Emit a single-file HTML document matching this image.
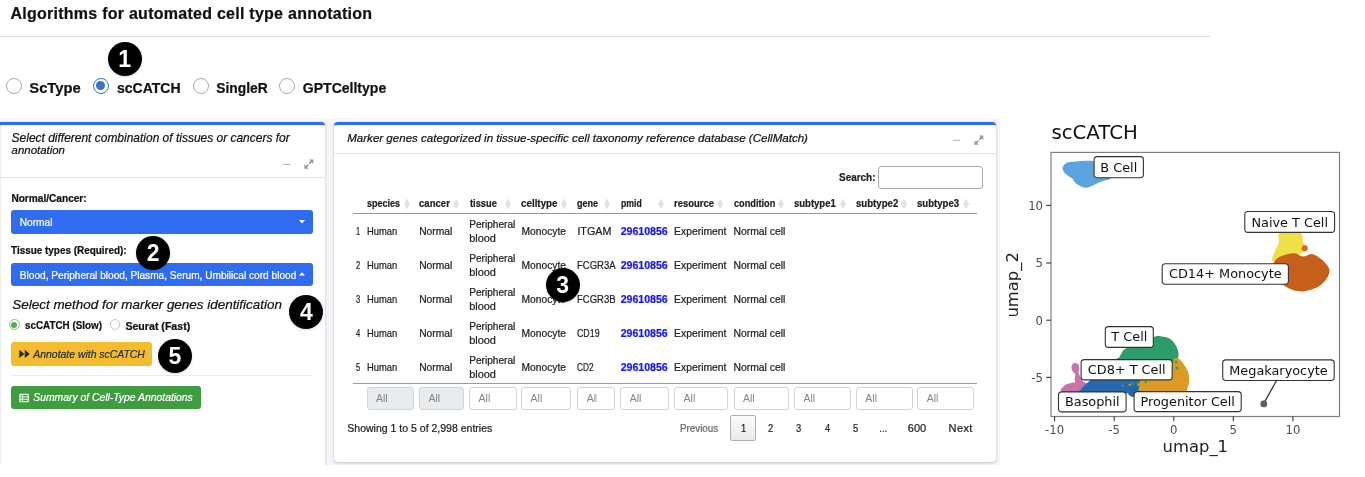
<!DOCTYPE html>
<html lang="en">
<head>
<meta charset="utf-8">
<title>Algorithms for automated cell type annotation</title>
<style>
html,body{margin:0;padding:0;background:#fff;}
body{width:1365px;height:477px;overflow:hidden;position:relative;font-family:"Liberation Sans",sans-serif;}
.a{position:absolute;box-sizing:border-box;}
.t{position:absolute;white-space:pre;line-height:1;-webkit-text-stroke:0.22px currentColor;transform-origin:0 50%;font-family:"Liberation Sans",sans-serif;}
.card{position:absolute;box-sizing:border-box;background:#fff;border-top:3px solid #2f6cf0;border-radius:4px;box-shadow:0 0 1px rgba(0,0,0,.13),0 1px 3px rgba(0,0,0,.2);}
.hl{position:absolute;height:1px;background:rgba(0,0,0,.11);}
.sel{position:absolute;box-sizing:border-box;background:#2f6cf0;border-radius:3px;}
.num{position:absolute;width:34px;height:34px;border-radius:50%;background:#000;color:#fff;font:700 23px/34px "Liberation Sans",sans-serif;text-align:center;box-shadow:0 1px 3px rgba(0,0,0,.15);}
.radio{position:absolute;box-sizing:border-box;border-radius:50%;background:#fff;border:1px solid #a9a9a9;}
.fi{position:absolute;box-sizing:border-box;top:386.6px;height:23.2px;border:1px solid #ced4da;border-radius:3px;background:#fff;overflow:hidden;color:#7d858d;font:400 10.5px/21.4px "Liberation Sans",sans-serif;padding-left:8.3px;white-space:pre;}
.fi.d{background:#e9ecef;}
.srt{position:absolute;top:198px;width:6px;height:12px;}
</style>
</head>
<body>
<div id="app" style="position:absolute;left:0;top:0;width:1365px;height:477px;will-change:transform">
<!-- page header -->
<div class="hl" style="left:0;top:36px;width:1210px;background:#d9d9d9"></div>

<!-- algorithm radio buttons -->
<div class="radio" style="left:5.8px;top:78px;width:16px;height:16px"></div>
<div class="radio" style="left:92.8px;top:78px;width:16px;height:16px;border:1.5px solid #2f6fd6"><div class="a" style="left:2px;top:2px;width:9px;height:9px;border-radius:50%;background:#3b71c8"></div></div>
<div class="radio" style="left:193.1px;top:78px;width:16px;height:16px"></div>
<div class="radio" style="left:279.2px;top:78px;width:16px;height:16px"></div>

<!-- content wrapper -->
<div class="a" style="left:0;top:118px;width:1000px;height:346.6px;background:#f4f6f9"></div>

<!-- left card -->
<div class="card" style="left:-4px;top:121.8px;width:329.3px;height:360px"></div>
<div class="a" style="left:0;top:124px;width:1px;height:341px;background:rgba(0,0,0,.07)"></div>
<div class="hl" style="left:0;top:177px;width:325px"></div>
<svg class="a" style="left:280px;top:157px" width="36" height="14" viewBox="0 0 36 14"><rect x="3" y="6.8" width="7.2" height="1.1" fill="#adb5bd"/><g fill="#949ca5"><path d="M29 2.6h4.3v4.3l-1.5-1.5-1.9 1.9-1.3-1.3 1.9-1.9z"/><path d="M28.6 11.8h-4.3v-4.3l1.5 1.5 1.9-1.9 1.3 1.3-1.9 1.9z"/></g></svg>
<div class="sel" style="left:11.3px;top:210px;width:301.4px;height:23.5px"></div>
<svg class="a" style="left:299px;top:219.5px" width="6" height="4" viewBox="0 0 6 4"><path d="M0 0h6L3 3.4z" fill="#fff"/></svg>
<div class="sel" style="left:11.3px;top:262.7px;width:301.4px;height:23.4px"></div>
<svg class="a" style="left:299px;top:272.3px" width="6" height="4" viewBox="0 0 6 4"><path d="M0 3.6h6L3 .2z" fill="#fff"/></svg>
<!-- method radios -->
<div class="radio" style="left:8.6px;top:319px;width:11.4px;height:11.4px;border:1.1px solid #79c47b"><div class="a" style="left:1.5px;top:1.5px;width:6.2px;height:6.2px;border-radius:50%;background:#4fad52"></div></div>
<div class="radio" style="left:109.7px;top:319.3px;width:10.7px;height:10.7px;border-color:#c6c6c6"></div>
<!-- buttons -->
<div class="a" style="left:11.4px;top:342.2px;width:140.7px;height:23.6px;background:#f5bc30;border-radius:3px"></div>
<svg class="a" style="left:19.2px;top:349.3px" width="11.9" height="9.8" viewBox="0 0 11 9"><path d="M.3 .6L5 4.5.3 8.4zM5.3 .6L10 4.5 5.3 8.4z" fill="#1f2d3d"/></svg>
<div class="hl" style="left:11.4px;top:375.3px;width:301.3px;background:rgba(0,0,0,.075)"></div>
<div class="a" style="left:11.4px;top:386.2px;width:189.5px;height:23.2px;background:#3f9c41;border-radius:3px"></div>
<svg class="a" style="left:19.3px;top:392.9px" width="10.2" height="10.2" viewBox="0 0 9 9"><rect x=".3" y=".6" width="8.4" height="7.6" rx=".9" fill="#fff"/><g fill="#3f9c41"><rect x="1.3" y="1.7" width="1.5" height="1.3"/><rect x="3.6" y="1.7" width="4.1" height="1.3"/><rect x="1.3" y="3.8" width="1.5" height="1.3"/><rect x="3.6" y="3.8" width="4.1" height="1.3"/><rect x="1.3" y="5.9" width="1.5" height="1.3"/><rect x="3.6" y="5.9" width="4.1" height="1.3"/></g></svg>

<!-- table card -->
<div class="card" style="left:334.4px;top:121.8px;width:661.3px;height:340.2px"></div>
<div class="hl" style="left:334.4px;top:153px;width:661.3px"></div>
<svg class="a" style="left:950px;top:132.5px" width="36" height="14" viewBox="0 0 36 14"><rect x="3" y="6.8" width="7.2" height="1.1" fill="#adb5bd"/><g fill="#949ca5"><path d="M29 2.6h4.3v4.3l-1.5-1.5-1.9 1.9-1.3-1.3 1.9-1.9z"/><path d="M28.6 11.8h-4.3v-4.3l1.5 1.5 1.9-1.9 1.3 1.3-1.9 1.9z"/></g></svg>
<div class="a" style="left:878px;top:166px;width:105px;height:22.6px;border:1px solid #aaa;border-radius:3px;background:#fff"></div>
<div class="hl" style="left:353px;top:212.8px;width:624px;background:#9a9a9a"></div>
<div class="hl" style="left:353px;top:383px;width:624px;background:#9a9a9a"></div>
<svg class="srt" style="left:403.5px" viewBox="0 0 6 12"><path d="M3 .5L5.95 6 3 11.5 .05 6z" fill="#e3e3e3"/></svg>
<svg class="srt" style="left:452.9px" viewBox="0 0 6 12"><path d="M3 .5L5.95 6 3 11.5 .05 6z" fill="#e3e3e3"/></svg>
<svg class="srt" style="left:505.1px" viewBox="0 0 6 12"><path d="M3 .5L5.95 6 3 11.5 .05 6z" fill="#e3e3e3"/></svg>
<svg class="srt" style="left:561.1px" viewBox="0 0 6 12"><path d="M3 .5L5.95 6 3 11.5 .05 6z" fill="#e3e3e3"/></svg>
<svg class="srt" style="left:604.2px" viewBox="0 0 6 12"><path d="M3 .5L5.95 6 3 11.5 .05 6z" fill="#e3e3e3"/></svg>
<svg class="srt" style="left:657.9px" viewBox="0 0 6 12"><path d="M3 .5L5.95 6 3 11.5 .05 6z" fill="#e3e3e3"/></svg>
<svg class="srt" style="left:717.4px" viewBox="0 0 6 12"><path d="M3 .5L5.95 6 3 11.5 .05 6z" fill="#e3e3e3"/></svg>
<svg class="srt" style="left:777.5px" viewBox="0 0 6 12"><path d="M3 .5L5.95 6 3 11.5 .05 6z" fill="#e3e3e3"/></svg>
<svg class="srt" style="left:839.6px" viewBox="0 0 6 12"><path d="M3 .5L5.95 6 3 11.5 .05 6z" fill="#e3e3e3"/></svg>
<svg class="srt" style="left:901.3px" viewBox="0 0 6 12"><path d="M3 .5L5.95 6 3 11.5 .05 6z" fill="#e3e3e3"/></svg>
<svg class="srt" style="left:962.7px" viewBox="0 0 6 12"><path d="M3 .5L5.95 6 3 11.5 .05 6z" fill="#e3e3e3"/></svg>

<div class="fi d" style="left:366.6px;width:47.2px">All</div>
<div class="fi d" style="left:419.2px;width:44.5px">All</div>
<div class="fi" style="left:469.3px;width:47.4px">All</div>
<div class="fi" style="left:521.3px;width:50.2px">All</div>
<div class="fi" style="left:577.4px;width:37.7px"><span style="display:inline-block;width:10.4px;overflow:hidden;vertical-align:top">All</span></div>
<div class="fi" style="left:620.4px;width:48.6px">All</div>
<div class="fi" style="left:674.3px;width:54.0px">All</div>
<div class="fi" style="left:733.6px;width:55.1px">All</div>
<div class="fi" style="left:794.1px;width:56.6px">All</div>
<div class="fi" style="left:856px;width:57.0px">All</div>
<div class="fi" style="left:917.4px;width:56.4px">All</div>

<div class="a" style="left:730.2px;top:415px;width:25.8px;height:25.6px;border:1px solid #b0b0b0;border-radius:2px;background:linear-gradient(#fcfcfc,#e9e9e9)"></div>

<div class="a" style="left:0;top:464.7px;width:1000px;height:13px;background:#fff"></div>
<span class="t" style="left:10.4px;top:6.1px;font-size:16.00px;font-weight:700;color:#111;letter-spacing:0.26px;">Algorithms for automated cell type annotation</span>
<span class="t" style="left:29.3px;top:80.8px;font-size:14.76px;font-weight:700;color:#111;">ScType</span>
<span class="t" style="left:117.0px;top:81.4px;font-size:14.01px;font-weight:700;color:#111;">scCATCH</span>
<span class="t" style="left:216.3px;top:81.6px;font-size:13.80px;font-weight:700;color:#111;">SingleR</span>
<span class="t" style="left:302.8px;top:81.4px;font-size:14.04px;font-weight:700;color:#111;">GPTCelltype</span>
<span class="t" style="left:11.6px;top:132.4px;font-size:11.98px;font-style:italic;color:#111;">Select different combination of tissues or cancers for</span>
<span class="t" style="left:11.6px;top:144.6px;font-size:11.43px;font-style:italic;color:#111;">annotation</span>
<span class="t" style="left:11.4px;top:193.7px;font-size:10.12px;font-weight:700;color:#111;">Normal/Cancer:</span>
<span class="t" style="left:19.8px;top:218.2px;font-size:10.12px;color:#fff;">Normal</span>
<span class="t" style="left:11.4px;top:246.3px;font-size:10.12px;font-weight:700;color:#111;transform:scaleX(0.982);">Tissue types (Required):</span>
<span class="t" style="left:19.8px;top:270.7px;font-size:10.12px;color:#fff;">Blood, Peripheral blood, Plasma, Serum, Umbilical cord blood</span>
<span class="t" style="left:12.3px;top:297.9px;font-size:13.44px;font-style:italic;color:#111;">Select method for marker genes identification</span>
<span class="t" style="left:25.1px;top:321.1px;font-size:10.12px;font-weight:700;color:#111;transform:scaleX(0.975);">scCATCH (Slow)</span>
<span class="t" style="left:125.4px;top:320.7px;font-size:10.62px;font-weight:700;color:#111;">Seurat (Fast)</span>
<span class="t" style="left:33.3px;top:349.8px;font-size:10.43px;font-style:italic;color:#1f2d3d;">Annotate with scCATCH</span>
<span class="t" style="left:33.3px;top:393.4px;font-size:10.37px;font-style:italic;color:#fff;">Summary of Cell-Type Annotations</span>
<span class="t" style="left:347.2px;top:132.8px;font-size:11.57px;font-style:italic;color:#111;">Marker genes categorized in tissue-specific cell taxonomy reference database (CellMatch)</span>
<span class="t" style="left:839.1px;top:173.3px;font-size:10.12px;font-weight:700;color:#222;transform:scaleX(0.983);">Search:</span>
<span class="t" style="left:366.7px;top:199.3px;font-size:10.12px;font-weight:700;color:#222;transform:scaleX(0.891);">species</span>
<span class="t" style="left:419.1px;top:199.3px;font-size:10.12px;font-weight:700;color:#222;transform:scaleX(0.947);">cancer</span>
<span class="t" style="left:469.8px;top:199.3px;font-size:10.12px;font-weight:700;color:#222;transform:scaleX(0.920);">tissue</span>
<span class="t" style="left:521.4px;top:199.3px;font-size:10.12px;font-weight:700;color:#222;transform:scaleX(0.971);">celltype</span>
<span class="t" style="left:576.8px;top:199.3px;font-size:10.12px;font-weight:700;color:#222;transform:scaleX(0.893);">gene</span>
<span class="t" style="left:620.7px;top:199.3px;font-size:10.12px;font-weight:700;color:#222;transform:scaleX(0.856);">pmid</span>
<span class="t" style="left:674.1px;top:199.3px;font-size:10.12px;font-weight:700;color:#222;transform:scaleX(0.938);">resource</span>
<span class="t" style="left:733.5px;top:199.3px;font-size:10.12px;font-weight:700;color:#222;transform:scaleX(0.907);">condition</span>
<span class="t" style="left:793.9px;top:199.3px;font-size:10.12px;font-weight:700;color:#222;transform:scaleX(0.941);">subtype1</span>
<span class="t" style="left:855.6px;top:199.3px;font-size:10.12px;font-weight:700;color:#222;transform:scaleX(0.952);">subtype2</span>
<span class="t" style="left:917.4px;top:199.3px;font-size:10.12px;font-weight:700;color:#222;transform:scaleX(0.950);">subtype3</span>
<span class="t" style="left:355.8px;top:226.8px;font-size:10.12px;color:#222;transform:scaleX(0.745);">1</span>
<span class="t" style="left:366.9px;top:226.8px;font-size:10.12px;color:#222;transform:scaleX(0.929);">Human</span>
<span class="t" style="left:419.2px;top:226.7px;font-size:10.27px;color:#222;">Normal</span>
<span class="t" style="left:469.2px;top:219.8px;font-size:10.14px;color:#222;">Peripheral</span>
<span class="t" style="left:469.2px;top:233.4px;font-size:10.95px;color:#222;">blood</span>
<span class="t" style="left:521.6px;top:226.7px;font-size:10.24px;color:#222;">Monocyte</span>
<span class="t" style="left:577.4px;top:226.3px;font-size:10.73px;color:#222;">ITGAM</span>
<span class="t" style="left:620.7px;top:226.4px;font-size:10.58px;font-weight:700;color:#1414ff;">29610856</span>
<span class="t" style="left:674.1px;top:226.6px;font-size:10.36px;color:#222;">Experiment</span>
<span class="t" style="left:733.5px;top:226.6px;font-size:10.36px;color:#222;">Normal cell</span>
<span class="t" style="left:355.8px;top:260.8px;font-size:10.12px;color:#222;transform:scaleX(0.745);">2</span>
<span class="t" style="left:366.9px;top:260.8px;font-size:10.12px;color:#222;transform:scaleX(0.929);">Human</span>
<span class="t" style="left:419.2px;top:260.7px;font-size:10.27px;color:#222;">Normal</span>
<span class="t" style="left:469.2px;top:253.8px;font-size:10.14px;color:#222;">Peripheral</span>
<span class="t" style="left:469.2px;top:267.4px;font-size:10.95px;color:#222;">blood</span>
<span class="t" style="left:521.6px;top:260.7px;font-size:10.24px;color:#222;">Monocyte</span>
<span class="t" style="left:577.4px;top:260.8px;font-size:10.12px;color:#222;transform:scaleX(0.940);">FCGR3A</span>
<span class="t" style="left:620.7px;top:260.4px;font-size:10.58px;font-weight:700;color:#1414ff;">29610856</span>
<span class="t" style="left:674.1px;top:260.6px;font-size:10.36px;color:#222;">Experiment</span>
<span class="t" style="left:733.5px;top:260.6px;font-size:10.36px;color:#222;">Normal cell</span>
<span class="t" style="left:355.8px;top:294.8px;font-size:10.12px;color:#222;transform:scaleX(0.745);">3</span>
<span class="t" style="left:366.9px;top:294.8px;font-size:10.12px;color:#222;transform:scaleX(0.929);">Human</span>
<span class="t" style="left:419.2px;top:294.7px;font-size:10.27px;color:#222;">Normal</span>
<span class="t" style="left:469.2px;top:287.8px;font-size:10.14px;color:#222;">Peripheral</span>
<span class="t" style="left:469.2px;top:301.4px;font-size:10.95px;color:#222;">blood</span>
<span class="t" style="left:521.6px;top:294.7px;font-size:10.24px;color:#222;">Monocyte</span>
<span class="t" style="left:577.4px;top:294.8px;font-size:10.12px;color:#222;transform:scaleX(0.940);">FCGR3B</span>
<span class="t" style="left:620.7px;top:294.4px;font-size:10.58px;font-weight:700;color:#1414ff;">29610856</span>
<span class="t" style="left:674.1px;top:294.6px;font-size:10.36px;color:#222;">Experiment</span>
<span class="t" style="left:733.5px;top:294.6px;font-size:10.36px;color:#222;">Normal cell</span>
<span class="t" style="left:355.8px;top:328.8px;font-size:10.12px;color:#222;transform:scaleX(0.745);">4</span>
<span class="t" style="left:366.9px;top:328.8px;font-size:10.12px;color:#222;transform:scaleX(0.929);">Human</span>
<span class="t" style="left:419.2px;top:328.7px;font-size:10.27px;color:#222;">Normal</span>
<span class="t" style="left:469.2px;top:321.8px;font-size:10.14px;color:#222;">Peripheral</span>
<span class="t" style="left:469.2px;top:335.4px;font-size:10.95px;color:#222;">blood</span>
<span class="t" style="left:521.6px;top:328.7px;font-size:10.24px;color:#222;">Monocyte</span>
<span class="t" style="left:577.4px;top:328.8px;font-size:10.12px;color:#222;transform:scaleX(0.873);">CD19</span>
<span class="t" style="left:620.7px;top:328.4px;font-size:10.58px;font-weight:700;color:#1414ff;">29610856</span>
<span class="t" style="left:674.1px;top:328.6px;font-size:10.36px;color:#222;">Experiment</span>
<span class="t" style="left:733.5px;top:328.6px;font-size:10.36px;color:#222;">Normal cell</span>
<span class="t" style="left:355.8px;top:362.8px;font-size:10.12px;color:#222;transform:scaleX(0.745);">5</span>
<span class="t" style="left:366.9px;top:362.8px;font-size:10.12px;color:#222;transform:scaleX(0.929);">Human</span>
<span class="t" style="left:419.2px;top:362.7px;font-size:10.27px;color:#222;">Normal</span>
<span class="t" style="left:469.2px;top:355.8px;font-size:10.14px;color:#222;">Peripheral</span>
<span class="t" style="left:469.2px;top:369.4px;font-size:10.95px;color:#222;">blood</span>
<span class="t" style="left:521.6px;top:362.7px;font-size:10.24px;color:#222;">Monocyte</span>
<span class="t" style="left:577.4px;top:362.8px;font-size:10.12px;color:#222;transform:scaleX(0.820);">CD2</span>
<span class="t" style="left:620.7px;top:362.4px;font-size:10.58px;font-weight:700;color:#1414ff;">29610856</span>
<span class="t" style="left:674.1px;top:362.6px;font-size:10.36px;color:#222;">Experiment</span>
<span class="t" style="left:733.5px;top:362.6px;font-size:10.36px;color:#222;">Normal cell</span>
<span class="t" style="left:347.3px;top:423.0px;font-size:10.52px;color:#222;">Showing 1 to 5 of 2,998 entries</span>
<span class="t" style="left:679.5px;top:423.8px;font-size:10.12px;color:#666;transform:scaleX(0.970);">Previous</span>
<span class="t" style="left:740.5px;top:423.8px;font-size:10.12px;color:#222;transform:scaleX(0.923);">1</span>
<span class="t" style="left:767.7px;top:423.8px;font-size:10.12px;color:#222;transform:scaleX(0.923);">2</span>
<span class="t" style="left:796.1px;top:423.8px;font-size:10.12px;color:#222;transform:scaleX(0.923);">3</span>
<span class="t" style="left:824.6px;top:423.8px;font-size:10.12px;color:#222;transform:scaleX(0.923);">4</span>
<span class="t" style="left:852.9px;top:423.8px;font-size:10.12px;color:#222;transform:scaleX(0.923);">5</span>
<span class="t" style="left:878.5px;top:423.8px;font-size:10.12px;color:#222;transform:scaleX(0.840);">…</span>
<span class="t" style="left:907.7px;top:423.1px;font-size:11.00px;color:#222;letter-spacing:0.07px;">600</span>
<span class="t" style="left:948.6px;top:423.1px;font-size:11.00px;color:#222;letter-spacing:0.36px;">Next</span>

<!-- step markers -->
<div class="num" style="left:107.6px;top:41.8px">1</div>
<div class="num" style="left:136.1px;top:236.4px">2</div>
<div class="num" style="left:545.7px;top:267.8px">3</div>
<div class="num" style="left:289.3px;top:294.5px">4</div>
<div class="num" style="left:157.8px;top:339px">5</div>

<!-- UMAP plot -->
<svg class="a" style="left:1000px;top:100px" width="365" height="377" viewBox="1000 100 365 377" font-family="DejaVu Sans, Liberation Sans, sans-serif">
<rect x="1000" y="100" width="365" height="377" fill="#fff"/>
<path d="M1062.6 167.6C1062.8 166.2 1063.8 164.8 1065.1 163.9C1066.4 163.0 1066.6 162.5 1070.2 162.0C1073.8 161.5 1082.3 160.7 1086.5 160.7C1090.7 160.7 1092.4 160.4 1095.3 162.0C1098.2 163.6 1101.4 167.3 1104.0 170.0C1106.6 172.7 1111.4 176.1 1111.0 178.0C1110.6 179.9 1104.6 180.2 1101.6 181.5C1098.6 182.8 1095.3 184.4 1092.8 185.5C1090.3 186.6 1088.6 187.7 1086.5 187.8C1084.4 187.9 1082.1 186.8 1080.2 185.9C1078.3 185.1 1076.6 184.0 1075.2 182.7C1073.8 181.4 1073.3 179.5 1072.0 178.3C1070.7 177.1 1068.9 176.5 1067.6 175.4C1066.2 174.3 1064.7 173.3 1063.9 172.0C1063.1 170.7 1062.4 168.9 1062.6 167.6Z" fill="#5ca4e0"/>
<path d="M1280.0 232.5C1283.5 230.9 1296.0 231.1 1299.8 232.5C1303.6 233.9 1302.3 238.9 1303.1 241.2C1303.9 243.5 1304.8 244.5 1304.6 246.5C1304.4 248.5 1303.4 251.4 1302.0 253.0C1300.6 254.6 1298.3 255.0 1296.0 256.0C1293.7 257.0 1290.7 258.2 1288.0 259.0C1285.3 259.8 1282.6 260.8 1280.0 261.0C1277.4 261.2 1273.2 261.9 1272.3 260.4C1271.4 258.9 1273.4 255.2 1274.5 252.2C1275.6 249.2 1278.0 245.6 1278.9 242.3C1279.8 239.0 1276.5 234.1 1280.0 232.5Z" fill="#efe045"/>
<circle cx="1304.7" cy="248.3" r="3.1" fill="#d2691e"/>
<path d="M1276.7 258.8C1278.5 257.1 1280.4 256.4 1283.3 255.5C1286.2 254.6 1291.0 253.1 1294.3 253.3C1297.6 253.5 1300.2 256.5 1303.1 256.6C1306.0 256.7 1309.0 253.6 1311.9 254.0C1314.8 254.4 1318.1 256.9 1320.7 258.8C1323.3 260.7 1325.8 263.5 1327.3 265.5C1328.8 267.5 1329.5 269.0 1329.5 271.0C1329.5 273.0 1328.6 275.4 1327.3 277.6C1326.0 279.8 1324.0 282.4 1321.8 284.2C1319.6 286.0 1317.2 287.4 1314.1 288.6C1311.0 289.8 1306.8 291.2 1303.1 291.4C1299.4 291.6 1295.4 290.7 1292.1 289.7C1288.8 288.7 1285.5 286.4 1283.3 285.3C1281.1 284.2 1280.6 284.7 1278.9 283.1C1277.2 281.6 1274.1 278.9 1273.0 276.0C1271.9 273.1 1271.9 268.9 1272.5 266.0C1273.1 263.1 1274.9 260.6 1276.7 258.8Z" fill="#c65f1a"/>
<path d="M1061.0 391.0C1059.8 389.8 1061.7 388.6 1062.5 387.5C1063.3 386.4 1064.6 385.2 1066.0 384.5C1067.4 383.8 1069.5 383.4 1071.0 383.0C1072.5 382.6 1074.4 382.9 1075.0 382.2C1075.6 381.4 1074.6 379.8 1074.6 378.5C1074.6 377.2 1075.6 375.8 1075.2 374.5C1074.8 373.2 1072.8 371.8 1072.2 370.5C1071.6 369.2 1071.4 367.6 1071.6 366.5C1071.8 365.4 1072.5 364.2 1073.2 363.6C1073.9 363.0 1075.1 362.8 1076.0 363.0C1076.9 363.2 1078.0 363.9 1078.6 364.8C1079.1 365.7 1079.3 367.2 1079.3 368.5C1079.3 369.8 1078.5 371.2 1078.6 372.5C1078.7 373.8 1079.5 374.8 1080.0 376.0C1080.5 377.2 1080.8 378.5 1081.5 379.5C1082.2 380.5 1082.9 381.2 1084.0 382.0C1085.1 382.8 1087.0 383.0 1088.0 384.0C1089.0 385.0 1090.0 386.5 1090.0 388.0C1090.0 389.5 1091.3 391.9 1088.0 393.0C1084.7 394.1 1074.5 394.8 1070.0 394.5C1065.5 394.2 1062.2 392.2 1061.0 391.0Z" fill="#c774a9"/>
<path d="M1118.7 357.9C1116.3 358.2 1120.5 356.1 1115.7 359.9C1110.9 363.7 1094.9 376.6 1089.8 380.8C1084.7 385.0 1086.5 383.6 1085.0 385.0C1083.5 386.4 1081.9 388.1 1081.0 389.5C1080.1 390.9 1076.3 392.2 1079.5 393.3C1082.7 394.4 1092.3 396.0 1100.0 396.0C1107.7 396.0 1120.9 393.4 1125.7 393.3C1130.5 393.2 1127.5 394.5 1128.7 395.1C1129.9 395.7 1131.5 397.2 1132.7 397.1C1133.9 397.0 1134.4 395.8 1135.7 394.7C1137.0 393.6 1139.9 392.3 1140.6 390.7C1141.2 389.1 1139.4 386.9 1139.6 384.8C1139.8 382.7 1140.7 381.1 1141.6 378.0C1142.5 374.9 1146.9 369.3 1145.0 366.0C1143.1 362.7 1134.4 359.4 1130.0 358.0C1125.6 356.6 1121.1 357.6 1118.7 357.9Z" fill="#2767ad"/>
<path d="M1118.7 358.9C1119.2 357.4 1120.4 354.7 1121.7 352.9C1123.0 351.1 1121.6 350.5 1126.7 347.9C1131.8 345.3 1146.8 339.3 1152.6 337.4C1158.4 335.5 1158.8 336.2 1161.6 336.4C1164.4 336.6 1167.2 337.1 1169.5 338.5C1171.8 339.9 1174.0 342.5 1175.5 344.9C1177.0 347.3 1178.2 350.6 1178.5 352.9C1178.8 355.2 1178.3 357.2 1177.5 358.9C1176.7 360.5 1174.5 361.8 1173.5 362.8C1172.5 363.8 1175.4 364.5 1171.5 365.0C1167.6 365.5 1158.8 366.5 1150.0 366.0C1141.2 365.5 1123.9 363.2 1118.7 362.0C1113.5 360.8 1118.2 360.4 1118.7 358.9Z" fill="#2e9b6b"/>
<path d="M1171.5 364.8C1173.9 362.6 1173.2 359.4 1174.5 358.5C1175.8 357.6 1177.7 357.9 1179.5 359.3C1181.3 360.7 1184.0 364.2 1185.5 366.8C1187.0 369.4 1188.2 372.1 1188.8 374.8C1189.4 377.5 1189.3 380.3 1189.0 382.8C1188.7 385.3 1187.6 387.9 1187.0 389.7C1186.4 391.5 1190.0 392.6 1185.5 393.7C1181.0 394.8 1167.5 396.0 1160.0 396.0C1152.5 396.0 1144.0 395.6 1140.6 393.7C1137.2 391.8 1139.3 387.3 1139.6 384.8C1139.9 382.3 1139.2 380.9 1142.6 378.8C1146.0 376.7 1155.2 374.3 1160.0 372.0C1164.8 369.7 1169.1 367.1 1171.5 364.8Z" fill="#dc9b22"/>
<g fill="#2e9b6b"><circle cx="1122.7" cy="385.8" r="1.3"/><circle cx="1132.7" cy="383.8" r="1.5"/><circle cx="1137.6" cy="382.8" r="1.4"/><circle cx="1145.6" cy="381.8" r="1.2"/><circle cx="1177" cy="368" r="1.6"/><circle cx="1176" cy="362" r="1.5"/></g>
<g fill="#dc9b22"><circle cx="1129.7" cy="384.8" r="1.2"/><circle cx="1138.6" cy="384.8" r="1.2"/></g>
<line x1="1276.4" y1="380.8" x2="1264.2" y2="402.6" stroke="#2b2b2b" stroke-width="1.2"/>
<circle cx="1263.8" cy="403.9" r="3.4" fill="#5e5e5e"/>
<rect x="1051" y="152.4" width="288.5" height="264.1" fill="none" stroke="#7f7f7f" stroke-width="1.2"/>
<line x1="1046.3" y1="205.4" x2="1051" y2="205.4" stroke="#333" stroke-width="1.1"/>
<text x="1043" y="209.7" font-size="11.7" fill="#4d4d4d" text-anchor="end">10</text>
<line x1="1046.3" y1="263" x2="1051" y2="263" stroke="#333" stroke-width="1.1"/>
<text x="1043" y="267.3" font-size="11.7" fill="#4d4d4d" text-anchor="end">5</text>
<line x1="1046.3" y1="320.2" x2="1051" y2="320.2" stroke="#333" stroke-width="1.1"/>
<text x="1043" y="324.5" font-size="11.7" fill="#4d4d4d" text-anchor="end">0</text>
<line x1="1046.3" y1="377.4" x2="1051" y2="377.4" stroke="#333" stroke-width="1.1"/>
<text x="1043" y="381.7" font-size="11.7" fill="#4d4d4d" text-anchor="end">-5</text>
<line x1="1054.6" y1="416.5" x2="1054.6" y2="421.2" stroke="#333" stroke-width="1.1"/>
<text x="1054.6" y="434.1" font-size="11.7" fill="#4d4d4d" text-anchor="middle">-10</text>
<line x1="1114.2" y1="416.5" x2="1114.2" y2="421.2" stroke="#333" stroke-width="1.1"/>
<text x="1114.2" y="434.1" font-size="11.7" fill="#4d4d4d" text-anchor="middle">-5</text>
<line x1="1173.8" y1="416.5" x2="1173.8" y2="421.2" stroke="#333" stroke-width="1.1"/>
<text x="1173.8" y="434.1" font-size="11.7" fill="#4d4d4d" text-anchor="middle">0</text>
<line x1="1233.3" y1="416.5" x2="1233.3" y2="421.2" stroke="#333" stroke-width="1.1"/>
<text x="1233.3" y="434.1" font-size="11.7" fill="#4d4d4d" text-anchor="middle">5</text>
<line x1="1292.9" y1="416.5" x2="1292.9" y2="421.2" stroke="#333" stroke-width="1.1"/>
<text x="1292.9" y="434.1" font-size="11.7" fill="#4d4d4d" text-anchor="middle">10</text>
<text x="1051.5" y="138.8" font-size="19.7" fill="#111">scCATCH</text>
<text x="1195.3" y="451.8" font-size="16.4" fill="#222" text-anchor="middle">umap_1</text>
<text transform="translate(1018 284.9) rotate(-90)" font-size="16.4" fill="#222" text-anchor="middle">umap_2</text>
<rect x="1094.1" y="156.6" width="49.3" height="21.1" rx="3.2" fill="#fff" stroke="#333" stroke-width="1.1"/>
<text x="1118.8" y="171.7" font-size="12.85" fill="#111" text-anchor="middle">B Cell</text>
<rect x="1244.8" y="211.5" width="89.8" height="20.9" rx="3.2" fill="#fff" stroke="#333" stroke-width="1.1"/>
<text x="1289.7" y="226.9" font-size="12.85" fill="#111" text-anchor="middle">Naive T Cell</text>
<rect x="1162.2" y="263.7" width="126.2" height="20.5" rx="3.2" fill="#fff" stroke="#333" stroke-width="1.1"/>
<text x="1225.3" y="278.2" font-size="12.85" fill="#111" text-anchor="middle">CD14+ Monocyte</text>
<rect x="1105.3" y="326.6" width="48.0" height="20.8" rx="3.2" fill="#fff" stroke="#333" stroke-width="1.1"/>
<text x="1129.3" y="341.1" font-size="12.85" fill="#111" text-anchor="middle">T Cell</text>
<rect x="1081.1" y="359.6" width="91.1" height="20.3" rx="3.2" fill="#fff" stroke="#333" stroke-width="1.1"/>
<text x="1126.7" y="373.9" font-size="12.85" fill="#111" text-anchor="middle">CD8+ T Cell</text>
<rect x="1058.5" y="391.9" width="67.6" height="20.0" rx="3.2" fill="#fff" stroke="#333" stroke-width="1.1"/>
<text x="1092.3" y="405.7" font-size="12.85" fill="#111" text-anchor="middle">Basophil</text>
<rect x="1134.1" y="391.6" width="107.1" height="20.0" rx="3.2" fill="#fff" stroke="#333" stroke-width="1.1"/>
<text x="1187.7" y="405.7" font-size="12.85" fill="#111" text-anchor="middle">Progenitor Cell</text>
<rect x="1222.7" y="359.9" width="111.5" height="20.6" rx="3.2" fill="#fff" stroke="#333" stroke-width="1.1"/>
<text x="1278.5" y="374.9" font-size="12.85" fill="#111" text-anchor="middle">Megakaryocyte</text>
</svg>
</div>
</body>
</html>
